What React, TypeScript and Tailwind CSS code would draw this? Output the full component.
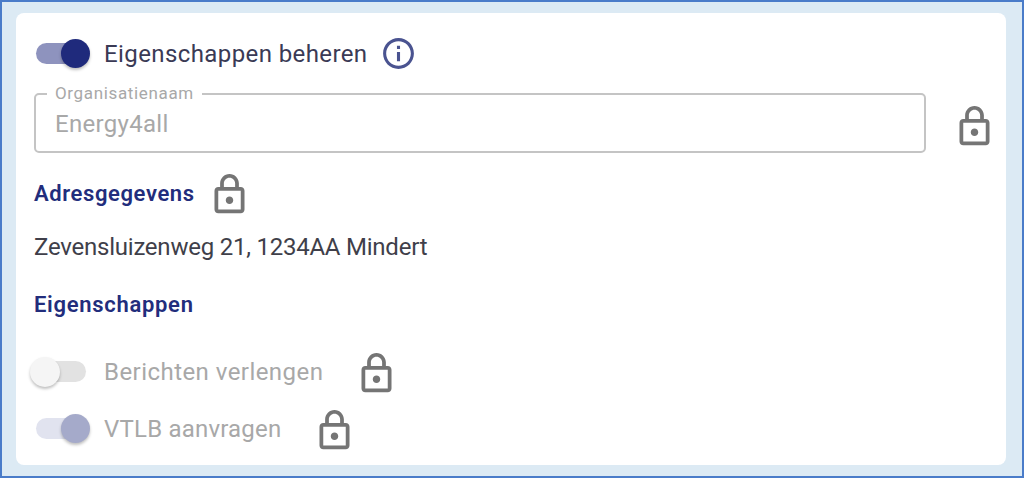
const font = { fontFamily: "Roboto, 'Noto Sans', sans-serif" }

function LockIcon({ className }: { className?: string }) {
  return (
    <svg viewBox="0 0 24 24" fill="#757575" className={className}>
      <path d="M18 8h-1V6c0-2.76-2.24-5-5-5S7 3.24 7 6v2H6c-1.1 0-2 .9-2 2v10c0 1.1.9 2 2 2h12c1.1 0 2-.9 2-2V10c0-1.1-.9-2-2-2zM9 6c0-1.66 1.34-3 3-3s3 1.34 3 3v2H9V6zm9 14H6V10h12v10zm-6-3c1.1 0 2-.9 2-2s-.9-2-2-2-2 .9-2 2 .9 2 2 2z" />
    </svg>
  )
}

function InfoIcon({ className }: { className?: string }) {
  return (
    <svg viewBox="0 0 24 24" fill="#4a5390" className={className}>
      <path d="M11 7h2v2h-2zm0 4h2v6h-2zm1-9C6.48 2 2 6.48 2 12s4.48 10 10 10 10-4.48 10-10S17.52 2 12 2zm0 18c-4.41 0-8-3.59-8-8s3.59-8 8-8 8 3.59 8 8-3.59 8-8 8z" />
    </svg>
  )
}

function Toggle({ track, thumb, on }: { track: string; thumb: string; on: boolean }) {
  return (
    <div className={`relative h-[21px] w-[50px] shrink-0 rounded-full ${track}`}>
      <div
        className={`absolute top-[-4px] rounded-full shadow-[0_2px_3px_rgba(0,0,0,0.25)] ${thumb} ${on ? "right-[-4px] h-[29px] w-[29px]" : "left-[-6px] h-[30px] w-[30px]"}`}
      />
    </div>
  )
}

export default function App() {
  return (
    <div
      style={font}
      className="h-[478px] w-[1024px] overflow-hidden border-2 border-[#4a7cc9] bg-[#dceaf4] pt-[11px] pr-4 pl-[14px]"
    >
      <div className="h-[452px] w-[990px] rounded-lg bg-white pt-[22px] pl-[18px]">
        <div className="flex h-9 items-center">
          <div className="ml-[2px]">
            <Toggle on track="bg-[#8e93be]" thumb="bg-[#1f2a7c]" />
          </div>
          <span className="mt-[1px] ml-[18px] text-[24px] leading-9 tracking-[0.4px] text-[#3a3a55]">
            Eigenschappen beheren
          </span>
          <InfoIcon className="ml-[13px] h-[37px] w-[37px]" />
        </div>

        <div className="mt-[22px] flex items-center">
          <div className="relative h-[60px] w-[892px] rounded-[5px] border-2 border-[#c4c4c4] pt-[15px] pl-[19px] text-[24px] leading-7 tracking-[0.3px] text-[#a8a8a8]">
            <span className="absolute top-[-12px] left-[11px] bg-white px-2 text-[17px] leading-[20px] tracking-[0.65px] text-[#a8a8a8]">
              Organisatienaam
            </span>
            Energy4all
          </div>
          <LockIcon className="mt-[6px] ml-[26px] h-[45px] w-[45px]" />
        </div>

        <div className="mt-[18px] flex h-[45px] items-center">
          <span className="mb-[1px] text-[22px] font-semibold tracking-[0.6px] text-[#222d7c]">Adresgegevens</span>
          <LockIcon className="mt-[2px] ml-[12px] h-[45px] w-[45px]" />
        </div>

        <p className="mt-[17px] text-[24px] leading-7 tracking-[-0.23px] text-[#3f3f4a]">
          Zevensluizenweg 21, 1234AA Mindert
        </p>

        <p className="mt-[30px] text-[22px] leading-7 font-semibold tracking-[0.7px] text-[#222d7c]">
          Eigenschappen
        </p>

        <div className="mt-[30px] flex h-[45px] items-center">
          <div className="ml-[2px]">
            <Toggle on={false} track="bg-[#e2e2e2]" thumb="bg-[#f5f5f5]" />
          </div>
          <span className="ml-[18px] text-[24px] leading-7 tracking-[0.45px] text-[#a8a8a8]">
            Berichten verlengen
          </span>
          <LockIcon className="mt-1 ml-[31px] h-[45px] w-[45px]" />
        </div>

        <div className="mt-[12px] flex h-[45px] items-center">
          <div className="ml-[2px]">
            <Toggle on track="bg-[#e1e3ef]" thumb="bg-[#a5aaca]" />
          </div>
          <span className="ml-[18px] text-[24px] leading-7 tracking-[0.2px] text-[#a8a8a8]">
            VTLB aanvragen
          </span>
          <LockIcon className="mt-1 ml-[31px] h-[45px] w-[45px]" />
        </div>
      </div>
    </div>
  )
}
